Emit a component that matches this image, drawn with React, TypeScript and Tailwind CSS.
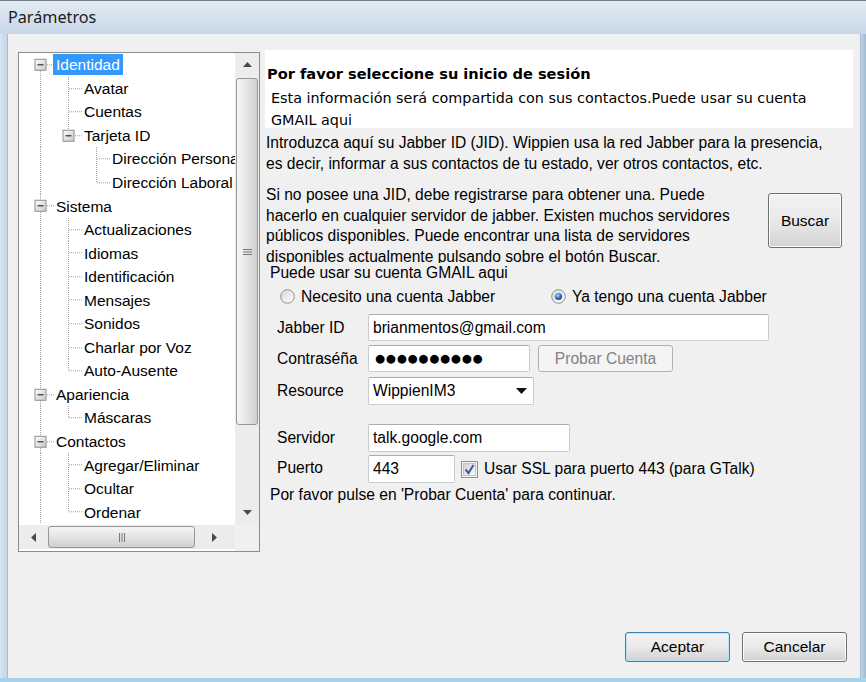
import React from "react";

type Kind = "pipe" | "tee" | "ell" | "first" | "blank";

const treeRows: { t: string; c: Kind[]; box?: boolean; sel?: boolean }[] = [
  { t: "Identidad", c: ["first"], box: true, sel: true },
  { t: "Avatar", c: ["pipe", "tee"] },
  { t: "Cuentas", c: ["pipe", "tee"] },
  { t: "Tarjeta ID", c: ["pipe", "ell"], box: true },
  { t: "Dirección Personal", c: ["pipe", "blank", "tee"] },
  { t: "Dirección Laboral", c: ["pipe", "blank", "ell"] },
  { t: "Sistema", c: ["tee"], box: true },
  { t: "Actualizaciones", c: ["pipe", "tee"] },
  { t: "Idiomas", c: ["pipe", "tee"] },
  { t: "Identificación", c: ["pipe", "tee"] },
  { t: "Mensajes", c: ["pipe", "tee"] },
  { t: "Sonidos", c: ["pipe", "tee"] },
  { t: "Charlar por Voz", c: ["pipe", "tee"] },
  { t: "Auto-Ausente", c: ["pipe", "ell"] },
  { t: "Apariencia", c: ["tee"], box: true },
  { t: "Máscaras", c: ["pipe", "ell"] },
  { t: "Contactos", c: ["tee"], box: true },
  { t: "Agregar/Eliminar", c: ["pipe", "tee"] },
  { t: "Ocultar", c: ["pipe", "tee"] },
  { t: "Ordenar", c: ["pipe", "ell"] },
];

function TreeCell({ kind, box }: { kind: Kind; box?: boolean }) {
  const line = { stroke: "#a3a3a3", strokeWidth: 1, strokeDasharray: "1 1" };
  return (
    <svg className="w-[28px] h-full shrink-0" overflow="visible">
      {(kind === "pipe" || kind === "tee") && <line x1="14.5" y1="0" x2="14.5" y2="100%" {...line} />}
      {kind === "ell" && <line x1="14.5" y1="0" x2="14.5" y2="50%" {...line} />}
      {kind === "first" && <line x1="14.5" y1="50%" x2="14.5" y2="100%" {...line} />}
      {kind !== "pipe" && kind !== "blank" && <line x1="15" y1="50%" x2="28" y2="50%" {...line} />}
      {box && (
        <svg x="0" y="50%" overflow="visible">
          <defs>
            <linearGradient id="exp" x1="0" y1="0" x2="1" y2="1">
              <stop offset="0" stopColor="#ffffff" />
              <stop offset="1" stopColor="#c8c8c8" />
            </linearGradient>
          </defs>
          <rect x="9" y="-5.5" width="11" height="11" fill="url(#exp)" stroke="#8e8f8f" />
          <line x1="11.5" y1="0" x2="17.5" y2="0" stroke="#333" strokeWidth="1.2" />
        </svg>
      )}
    </svg>
  );
}

function Tree() {
  return (
    <div className="w-[242px] h-[500px] border border-[#8a8c90] bg-white flex flex-col shrink-0">
      <div className="flex flex-1 min-h-0">
        <div className="flex-1 min-w-0 overflow-hidden pl-[7px]">
          {treeRows.map((r, i) => (
            <div key={i} className="flex h-[23.56px] items-center whitespace-nowrap">
              {r.c.map((k, j) => (
                <TreeCell key={j} kind={k} box={r.box && j === r.c.length - 1} />
              ))}
              <span
                className={`ml-[-1px] px-[3px] h-[21px] leading-[21px] text-[15.5px] ${
                  r.sel ? "bg-[#3399ff] text-white" : "text-black"
                }`}
              >
                {r.t}
              </span>
            </div>
          ))}
        </div>
        {/* vertical scrollbar */}
        <div className="w-[24px] bg-[#ececec] flex flex-col items-center">
          <div className="h-[24px] flex items-center justify-center">
            <svg width="9" height="6"><polygon points="0,5 4.5,0 9,5" fill="#4a4a4a" /></svg>
          </div>
          <div className="w-[22px] h-[347px] mt-[1px] rounded-[3px] border border-[#979797] bg-linear-to-r from-[#f6f6f6] via-[#e4e4e4] to-[#cfcfcf] flex items-center justify-center">
            <svg width="9" height="8">
              <line x1="0" y1="1.5" x2="9" y2="1.5" stroke="#777" />
              <line x1="0" y1="4" x2="9" y2="4" stroke="#777" />
              <line x1="0" y1="6.5" x2="9" y2="6.5" stroke="#777" />
            </svg>
          </div>
          <div className="flex-1" />
          <div className="h-[24px] flex items-center justify-center">
            <svg width="9" height="6"><polygon points="0,0 4.5,5 9,0" fill="#4a4a4a" /></svg>
          </div>
        </div>
      </div>
      {/* horizontal scrollbar */}
      <div className="h-[26px] flex">
        <div className="flex-1 bg-[#ececec] flex items-center h-[24px]">
          <div className="w-[29px] flex justify-center">
            <svg width="6" height="9"><polygon points="5,0 0,4.5 5,9" fill="#4a4a4a" /></svg>
          </div>
          <div className="w-[147px] h-[22px] rounded-[3px] border border-[#979797] bg-linear-to-b from-[#f6f6f6] via-[#e4e4e4] to-[#cfcfcf] flex items-center justify-center">
            <svg width="8" height="9">
              <line x1="1.5" y1="0" x2="1.5" y2="9" stroke="#777" />
              <line x1="4" y1="0" x2="4" y2="9" stroke="#777" />
              <line x1="6.5" y1="0" x2="6.5" y2="9" stroke="#777" />
            </svg>
          </div>
          <div className="flex-1 flex justify-center">
            <svg width="6" height="9"><polygon points="0,0 5,4.5 0,9" fill="#4a4a4a" /></svg>
          </div>
        </div>
        <div className="w-[24px] bg-[#f0f0f0]" />
      </div>
    </div>
  );
}

function Radio({ on }: { on?: boolean }) {
  return (
    <svg width="15" height="15" className="shrink-0">
      <defs>
        <linearGradient id={on ? "rOn" : "rOff"} x1="0" y1="0" x2="1" y2="1">
          <stop offset="0" stopColor="#d8d8d8" />
          <stop offset="1" stopColor="#ffffff" />
        </linearGradient>
        <radialGradient id="dot" cx="0.4" cy="0.35" r="0.7">
          <stop offset="0" stopColor="#a7d9ff" />
          <stop offset="0.6" stopColor="#2a6bc5" />
          <stop offset="1" stopColor="#0e3f8a" />
        </radialGradient>
      </defs>
      <circle cx="7.5" cy="7.5" r="6.8" fill={`url(#${on ? "rOn" : "rOff"})`} stroke="#8e8f8f" />
      {on && <circle cx="7.5" cy="7.5" r="3.6" fill="url(#dot)" />}
    </svg>
  );
}

function Input({
  w,
  value,
  className = "",
}: {
  w: string;
  value: string;
  className?: string;
}) {
  return (
    <div
      className={`${w} h-full bg-white border border-[#c9cdd3] border-t-[#abadb3] rounded-[2px] flex items-center pl-[4px] ${className}`}
    >
      {value}
    </div>
  );
}

function WinButton({ label, w, h, def }: { label: string; w: string; h: string; def?: boolean }) {
  return (
    <div
      className={`${w} ${h} rounded-[3px] border ${
        def ? "border-[#3c7fb1] shadow-[inset_0_0_0_1px_#b8e3f8]" : "border-[#707070] shadow-[inset_0_0_0_1px_#fbfbfb]"
      } bg-linear-to-b from-[#f3f3f3] via-[#e9e9e9] to-[#d2d2d2] flex items-center justify-center text-[15.5px] text-black`}
    >
      {label}
    </div>
  );
}

export default function App() {
  return (
    <div className="w-[866px] h-[682px] flex flex-col bg-[#c9d9ea] font-['Liberation_Sans',Arial,sans-serif] text-black overflow-hidden">
      {/* title bar */}
      <div className="h-[34px] shrink-0 border-t border-[#6f7b88] bg-linear-to-b from-[#e3ebf4] to-[#c8d7e8] flex items-center pl-[8px]">
        <span className="font-['Noto_Sans',sans-serif] text-[16.2px] text-[#1b1b1b]">Parámetros</span>
      </div>
      <div className="flex flex-1 min-h-0">
        <div className="w-[8px] bg-linear-to-r from-[#d9e6f2] to-[#c3d5e8] border-r border-[#a9bdd2]" />
        <div className="flex-1 bg-[#f0f0f0] flex flex-col">
          <div className="flex items-start">
            <div className="ml-[10px] mt-[18px]">
              <Tree />
            </div>
            {/* right panel */}
            <div className="ml-[5px] mt-[16px] w-[588px] text-[15.6px] whitespace-nowrap">
              <div className="h-[78px] bg-white overflow-hidden font-['DejaVu_Sans',sans-serif] text-[14.6px]">
                <div className="pt-[14px] pl-[2px] h-[34px] leading-[20px] font-bold">
                  Por favor seleccione su inicio de sesión
                </div>
                <div className="mt-[3px] pl-[6px] leading-[22px] text-[14.35px]">
                  Esta información será compartida con sus contactos.Puede usar su cuenta
                  <br />
                  GMAIL aqui
                </div>
              </div>
              <div className="pl-[1px] mt-[4px] leading-[21px]">
                Introduzca aquí su Jabber ID (JID). Wippien usa la red Jabber para la presencia,
                <br />
                es decir, informar a sus contactos de tu estado, ver otros contactos, etc.
              </div>
              <div className="flex mt-[11px]">
                <div className="w-[495px] h-[78px] overflow-hidden pl-[1px] leading-[20.7px]">
                  Si no posee una JID, debe registrarse para obtener una. Puede
                  <br />
                  hacerlo en cualquier servidor de jabber. Existen muchos servidores
                  <br />
                  públicos disponibles. Puede encontrar una lista de servidores
                  <br />
                  disponibles actualmente pulsando sobre el botón Buscar.
                </div>
                <div className="ml-[8px] mt-[8px]">
                  <WinButton label="Buscar" w="w-[74px]" h="h-[55px]" />
                </div>
              </div>
              <div className="pl-[5px] leading-[20px] h-[20px]">Puede usar su cuenta GMAIL aqui</div>
              <div className="mt-[2px] h-[24px] flex items-center">
                <div className="ml-[15px] flex items-center gap-[6px] w-[271px]">
                  <Radio />
                  <span>Necesito una cuenta Jabber</span>
                </div>
                <div className="flex items-center gap-[6px]">
                  <Radio on />
                  <span>Ya tengo una cuenta Jabber</span>
                </div>
              </div>
              <div className="mt-[5px] h-[27px] flex items-center">
                <div className="w-[103px] pl-[12px]">Jabber ID</div>
                <Input w="w-[401px]" value="brianmentos@gmail.com" />
              </div>
              <div className="mt-[4px] h-[27px] flex items-center">
                <div className="w-[103px] pl-[12px]">
                  <div className="w-[86px] overflow-hidden">Contraséña</div>
                </div>
                <Input
                  w="w-[162px]"
                  value="●●●●●●●●●●"
                  className="pl-[6px] font-['DejaVu_Sans',sans-serif] text-[11.5px] tracking-[0.8px]"
                />
                <div className="ml-[8px] w-[135px] h-[27px] rounded-[3px] border border-[#adb2b5] bg-[#f4f4f4] flex items-center justify-center text-[#838383]">
                  Probar Cuenta
                </div>
              </div>
              <div className="mt-[5px] h-[28px] flex items-center">
                <div className="w-[103px] pl-[12px]">Resource</div>
                <div className="w-[166px] h-full bg-white border border-[#c9cdd3] border-t-[#abadb3] rounded-[2px] flex items-center pl-[4px]">
                  <span className="flex-1">WippienIM3</span>
                  <svg width="11" height="6" className="mr-[6px]">
                    <polygon points="0,0 11,0 5.5,6" fill="#111" />
                  </svg>
                </div>
              </div>
              <div className="mt-[19px] h-[28px] flex items-center">
                <div className="w-[103px] pl-[12px]">Servidor</div>
                <Input w="w-[202px]" value="talk.google.com" />
              </div>
              <div className="mt-[3px] h-[28px] flex items-center">
                <div className="w-[103px] pl-[12px] self-start pt-[1px]">Puerto</div>
                <Input w="w-[87px]" value="443" />
                <svg width="17" height="17" className="ml-[6px] shrink-0">
                  <defs>
                    <linearGradient id="cb" x1="0" y1="0" x2="1" y2="1">
                      <stop offset="0" stopColor="#cfcfcf" />
                      <stop offset="1" stopColor="#fafafa" />
                    </linearGradient>
                  </defs>
                  <rect x="0.5" y="0.5" width="16" height="16" fill="#f4f4f4" stroke="#8e8f8f" />
                  <rect x="2.5" y="2.5" width="12" height="12" fill="url(#cb)" stroke="#c2c2c2" />
                  <polyline points="4.5,8.5 7.5,12 12.5,4" fill="none" stroke="#3c58a8" strokeWidth="2" />
                </svg>
                <span className="ml-[6px]">Usar SSL para puerto 443 (para GTalk)</span>
              </div>
              <div className="mt-[2px] pl-[5px] leading-[20px]">Por favor pulse en 'Probar Cuenta' para continuar.</div>
            </div>
          </div>
          <div className="mt-auto mb-[16px] flex justify-end gap-[12px] pr-[13px]">
            <WinButton label="Aceptar" w="w-[105px]" h="h-[30px]" def />
            <WinButton label="Cancelar" w="w-[105px]" h="h-[30px]" />
          </div>
        </div>
        <div className="w-[6px] bg-linear-to-r from-[#c3d5e8] to-[#9fb8d0] border-l border-[#a9bdd2]" />
      </div>
      <div className="h-[4px] bg-[#a6d3ea] shrink-0" />
    </div>
  );
}
